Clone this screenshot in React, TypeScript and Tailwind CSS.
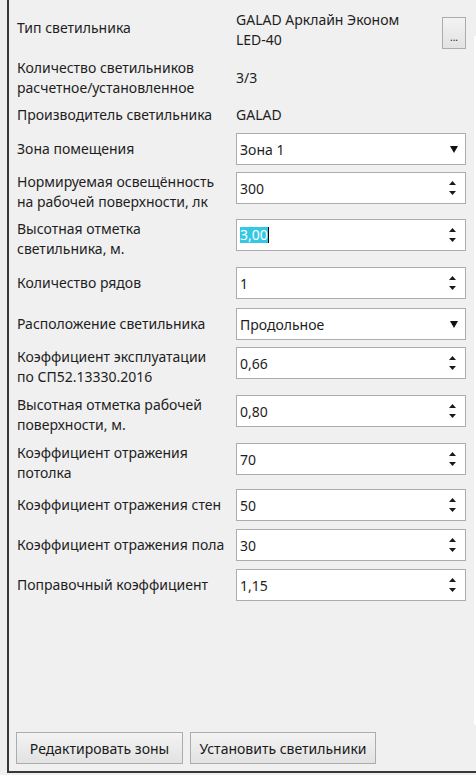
import type { ReactNode } from 'react'

const font = { fontFamily: '"Noto Sans", "Open Sans", sans-serif' }

function Spinner() {
  return (
    <div className="flex flex-col items-center justify-between h-full py-[8px] pr-[9px]">
      <svg width="7" height="4" viewBox="0 0 7 4">
        <path d="M3.5 0 L7 4 L0 4 Z" fill="#1a1a1a" />
      </svg>
      <svg width="7" height="4" viewBox="0 0 7 4">
        <path d="M0 0 L7 0 L3.5 4 Z" fill="#1a1a1a" />
      </svg>
    </div>
  )
}

function NumberField({ value, selected = false }: { value: string; selected?: boolean }) {
  return (
    <div className="w-[230px] h-[32px] bg-white border border-[#acacac] flex items-center justify-between">
      <div className="pl-[3px] flex items-center">
        {selected ? (
          <>
            <span className="bg-[#34c8e4] text-white leading-[16px]">{value}</span>
            <span className="w-px h-[16px] bg-black" />
          </>
        ) : (
          <span>{value}</span>
        )}
      </div>
      <Spinner />
    </div>
  )
}

function SelectField({ value }: { value: string }) {
  return (
    <div className="w-[230px] h-[32px] bg-white border border-[#acacac] flex items-center justify-between pl-[3px] pr-[7px]">
      <span>{value}</span>
      <svg width="8" height="7" viewBox="0 0 8 7">
        <path d="M0 0 L8 0 L4 7 Z" fill="#111" />
      </svg>
    </div>
  )
}

function Row({ label, children, mt }: { label: ReactNode; children: ReactNode; mt: string }) {
  return (
    <div className={`flex items-start ${mt}`}>
      <div className="w-[219px] leading-[20px]">{label}</div>
      {children}
    </div>
  )
}

function SingleRow({ label, children, mt }: { label: string; children: ReactNode; mt: string }) {
  return (
    <div className={`flex items-center ${mt}`}>
      <div className="w-[219px] leading-[20px]">{label}</div>
      {children}
    </div>
  )
}

function GrayButton({ children, className = '' }: { children: ReactNode; className?: string }) {
  return (
    <button
      className={`h-[32px] border border-[#acacac] bg-gradient-to-b from-[#f3f3f3] to-[#e2e2e2] text-[#1a1a1a] ${className}`}
    >
      {children}
    </button>
  )
}

export default function App() {
  return (
    <div className="w-[476px] h-[775px] bg-[#f0f0f0] text-[14px] text-[#1e1e1e]" style={font}>
      <div className="ml-[7px] h-[773px] border-l-2 border-b-2 border-[#383838] flex">
        <div className="flex-1 flex flex-col pl-[8px]">
          {/* Luminaire type */}
          <div className="flex items-start mt-[10px] h-[40px]">
            <div className="w-[219px] leading-[20px] mt-[8px]">Тип светильника</div>
            <div className="w-[206px] leading-[20px]">
              GALAD Арклайн Эконом
              <br />
              LED-40
            </div>
            <GrayButton className="w-[24px] mt-[7px] flex items-end justify-center pb-[6px] text-[10px] leading-none">
              ...
            </GrayButton>
          </div>

          <div className="flex items-center mt-[8px]">
            <div className="w-[219px] leading-[20px]">
              Количество светильников
              <br />
              расчетное/установленное
            </div>
            <div className="leading-[20px]">3/3</div>
          </div>

          <div className="flex items-center mt-[7px]">
            <div className="w-[219px] leading-[20px]">Производитель светильника</div>
            <div className="leading-[20px]">GALAD</div>
          </div>

          <SingleRow label="Зона помещения" mt="mt-[8px]">
            <SelectField value="Зона 1" />
          </SingleRow>

          <Row
            mt="mt-[7px]"
            label={
              <>
                Нормируемая освещённость
                <br />
                на рабочей поверхности, лк
              </>
            }
          >
            <NumberField value="300" />
          </Row>

          <Row
            mt="mt-[7px]"
            label={
              <>
                Высотная отметка
                <br />
                светильника, м.
              </>
            }
          >
            <NumberField value="3,00" selected />
          </Row>

          <SingleRow label="Количество рядов" mt="mt-[8px]">
            <NumberField value="1" />
          </SingleRow>

          <SingleRow label="Расположение светильника" mt="mt-[9px]">
            <SelectField value="Продольное" />
          </SingleRow>

          <Row
            mt="mt-[7px]"
            label={
              <>
                Коэффициент эксплуатации
                <br />
                по СП52.13330.2016
              </>
            }
          >
            <NumberField value="0,66" />
          </Row>

          <Row
            mt="mt-[8px]"
            label={
              <>
                Высотная отметка рабочей
                <br />
                поверхности, м.
              </>
            }
          >
            <NumberField value="0,80" />
          </Row>

          <Row
            mt="mt-[8px]"
            label={
              <>
                Коэффициент отражения
                <br />
                потолка
              </>
            }
          >
            <NumberField value="70" />
          </Row>

          <SingleRow label="Коэффициент отражения стен" mt="mt-[6px]">
            <NumberField value="50" />
          </SingleRow>

          <SingleRow label="Коэффициент отражения пола" mt="mt-[8px]">
            <NumberField value="30" />
          </SingleRow>

          <SingleRow label="Поправочный коэффициент" mt="mt-[8px]">
            <NumberField value="1,15" />
          </SingleRow>

          {/* Footer buttons */}
          <div className="mt-auto mb-[7px] -ml-[1px] flex gap-[7px]">
            <GrayButton className="w-[167px]">Редактировать зоны</GrayButton>
            <GrayButton className="w-[186px]">Установить светильники</GrayButton>
          </div>
        </div>
        <div className="w-[2px] mt-[36px] h-[689px] bg-white" />
      </div>
    </div>
  )
}
